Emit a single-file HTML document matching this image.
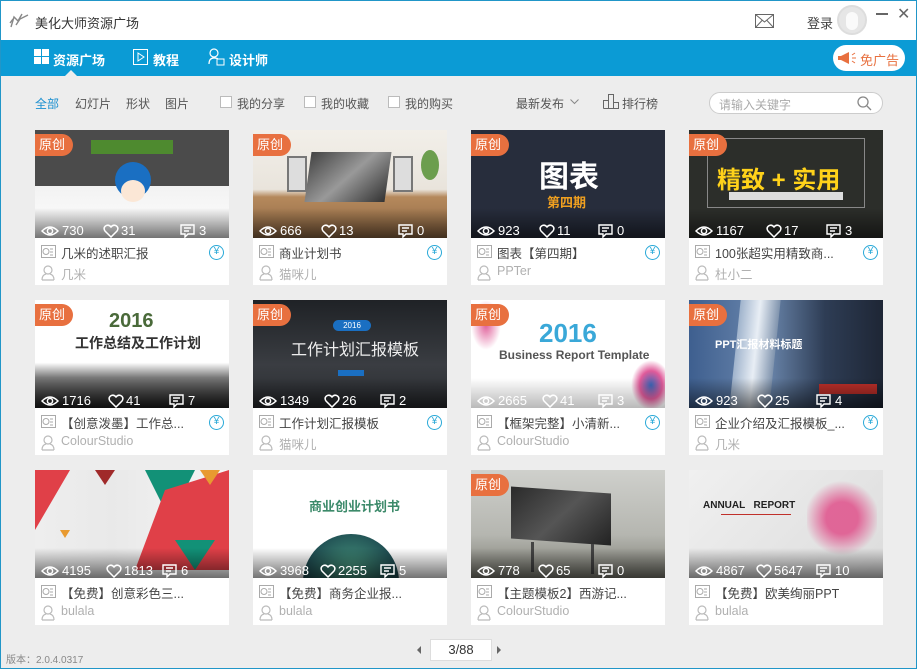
<!DOCTYPE html>
<html><head><meta charset="utf-8">
<style>
*{margin:0;padding:0;box-sizing:border-box}
body{width:917px;height:669px;overflow:hidden;background:#ededed;font-family:"Liberation Sans","Noto Sans CJK SC",sans-serif;position:relative;font-size:12px;color:#555}
.frame{position:absolute;left:0;top:0;width:917px;height:669px;border:1px solid #2196c8;pointer-events:none;z-index:50}
.titlebar{position:absolute;left:0;top:0;width:917px;height:40px;background:#fff}
.nav{position:absolute;left:0;top:40px;width:917px;height:36px;background:#0b9bd5}
.nav span{position:absolute;top:10px;color:#fff;font-size:13px;font-weight:bold}
.abs{position:absolute}
.filter{position:absolute;top:95px;font-size:12px;color:#555}
.cb{position:absolute;top:96px;width:12px;height:12px;border:1px solid #bbb;background:#fff}
.card{position:absolute;width:194px;height:155px;background:#fff}
.img{position:absolute;left:0;top:0;width:194px;height:108px;overflow:hidden}
.shade{position:absolute;left:0;bottom:0;width:194px;height:30px;background:linear-gradient(rgba(0,0,0,0),rgba(0,0,0,.55))}
.stats{position:absolute;left:0;top:93px;width:194px;height:16px;color:#fff;font-size:13px}
.stats svg{position:absolute;top:1px}
.stats b{position:absolute;font-weight:normal;top:0}
.badge{position:absolute;left:0;top:4px;width:38px;height:22px;background:#e8703f;border-radius:0 11px 11px 0;color:#fff;font-size:13px;line-height:22px;padding-left:4px}
.t{position:absolute;left:26px;top:113px;font-size:12.5px;color:#444;white-space:nowrap}
.a{position:absolute;left:26px;top:134px;font-size:12.5px;color:#b0b0b0}
.doc{position:absolute;left:6px;top:115px}
.usr{position:absolute;left:6px;top:135px}
.yuan{position:absolute;left:174px;top:115px;width:15px;height:15px;border:1.3px solid #2aa9d8;border-radius:50%;color:#2aa9d8;font-size:10px;line-height:12px;text-align:center}
</style></head><body>
<div class="titlebar">
 <svg class="abs" style="left:8px;top:11px" width="22" height="18" viewBox="0 0 22 18"><path d="M3 16 L6 6 L10 10 L14 3 M8 14 L12 8 L20 4 M5 8 L2 12" stroke="#888" stroke-width="1.4" fill="none"/></svg>
 <span class="abs" style="left:35px;top:13px;font-size:13px;color:#333">美化大师资源广场</span>
 <svg class="abs" style="left:755px;top:14px" width="19" height="14" viewBox="0 0 19 14"><rect x="0.5" y="0.5" width="18" height="13" fill="none" stroke="#666"/><path d="M0.5 0.5 L9.5 8 L18.5 0.5 M0.5 13.5 L7 6.5 M18.5 13.5 L12 6.5" stroke="#666" fill="none"/></svg>
 <span class="abs" style="left:807px;top:13px;font-size:13px;color:#444">登录</span>
 <div class="abs" style="left:837px;top:5px;width:30px;height:30px;border-radius:50%;background:#e6e6e6;border:2px solid #ddd"><div style="position:absolute;left:7px;top:5px;width:12px;height:18px;border-radius:6px;background:#fafafa"></div></div>
 <div class="abs" style="left:876px;top:13px;width:12px;height:2px;background:#666"></div>
 <span class="abs" style="left:897px;top:4px;font-size:16px;color:#666">✕</span>
</div>
<div class="nav">
 <svg class="abs" style="left:34px;top:9px" width="15" height="15"><rect x="0" y="0" width="7" height="7" fill="#fff"/><rect x="8" y="0" width="7" height="7" fill="#fff"/><rect x="0" y="8" width="7" height="7" fill="#fff"/><rect x="8" y="8" width="7" height="7" fill="#fff"/></svg>
 <span style="left:53px">资源广场</span>
 <div class="abs" style="left:65px;top:30px;width:0;height:0;border-left:6px solid transparent;border-right:6px solid transparent;border-bottom:6px solid #ededed"></div>
 <svg class="abs" style="left:133px;top:9px" width="15" height="16"><rect x="0.5" y="0.5" width="14" height="15" fill="none" stroke="#fff"/><path d="M5 4 L11 8 L5 12 Z" fill="none" stroke="#fff"/></svg>
 <span style="left:153px">教程</span>
 <svg class="abs" style="left:208px;top:8px" width="17" height="18"><circle cx="6" cy="5" r="4" fill="none" stroke="#fff" stroke-width="1.2"/><path d="M1 16 Q1 10 6 10 Q9 10 10 11" fill="none" stroke="#fff" stroke-width="1.2"/><rect x="9" y="11" width="7" height="6" fill="none" stroke="#fff"/></svg>
 <span style="left:229px">设计师</span>
 <div class="abs" style="left:833px;top:5px;width:72px;height:26px;background:#fff;border-radius:13px">
  <svg class="abs" style="left:5px;top:7px" width="20" height="12"><path d="M0 4 H3 V8 H0 Z M3 4 L11 0 V12 L3 8 Z" fill="#e8703f"/><path d="M14 3 L17 1 M14 6 H18 M14 9 L17 11" stroke="#e8703f" fill="none"/></svg>
  <span class="abs" style="left:27px;top:5px;font-size:13px;color:#e8703f;font-weight:normal">免广告</span>
 </div>
</div>
<span class="filter" style="left:35px;color:#1a8fd0">全部</span>
<span class="filter" style="left:75px">幻灯片</span>
<span class="filter" style="left:126px">形状</span>
<span class="filter" style="left:165px">图片</span>
<div class="cb" style="left:220px"></div><span class="filter" style="left:237px">我的分享</span>
<div class="cb" style="left:304px"></div><span class="filter" style="left:321px">我的收藏</span>
<div class="cb" style="left:388px"></div><span class="filter" style="left:405px">我的购买</span>
<span class="filter" style="left:516px">最新发布</span>
<svg class="abs" style="left:570px;top:99px" width="9" height="6"><path d="M0.5 0.5 L4.5 4.5 L8.5 0.5" fill="none" stroke="#888"/></svg>
<svg class="abs" style="left:603px;top:94px" width="16" height="15"><path d="M0.5 14.5 V6.5 H5.5 V14.5 M5.5 14.5 V0.5 H10.5 V14.5 M10.5 14.5 V8.5 H15.5 V14.5 H0.5" fill="none" stroke="#666"/></svg>
<span class="filter" style="left:622px">排行榜</span>
<div class="abs" style="left:709px;top:92px;width:174px;height:22px;background:#fff;border:1px solid #ccc;border-radius:11px">
 <span class="abs" style="left:9px;top:3px;color:#aaa;font-size:12px">请输入关键字</span>
 <svg class="abs" style="left:147px;top:3px" width="15" height="15"><circle cx="6" cy="6" r="5" fill="none" stroke="#888" stroke-width="1.3"/><path d="M10 10 L14 14" stroke="#888" stroke-width="1.3"/></svg>
</div>

<!-- Row 1 -->
<div class="card" style="left:35px;top:130px"><div class="img" style="background:linear-gradient(#4b4b4b 0,#4b4b4b 52%,#f2f2f2 52%,#fff 100%)">
<div class="abs" style="left:56px;top:10px;width:82px;height:14px;background:#4e8a2f"></div>
<div class="abs" style="left:80px;top:32px;width:36px;height:36px;border-radius:50%;background:#1a6fc2"></div><div class="abs" style="left:86px;top:50px;width:24px;height:22px;border-radius:50%;background:#fbe7d6"></div>
<div class="shade"></div></div></div>
<div class="card" style="left:253px;top:130px"><div class="img" style="background:linear-gradient(#f2efe9 0,#e9e4dc 55%,#b5895c 62%,#8f6844 100%)">
<div class="abs" style="left:55px;top:22px;width:80px;height:50px;background:linear-gradient(135deg,#444,#999,#333);transform:skewX(-8deg)"></div>
<div class="abs" style="left:34px;top:26px;width:20px;height:36px;background:#ddd;border:2px solid #777"></div>
<div class="abs" style="left:140px;top:26px;width:20px;height:36px;background:#ddd;border:2px solid #777"></div>
<div class="abs" style="left:168px;top:20px;width:18px;height:30px;background:#6c9e4e;border-radius:50%"></div>
<div class="shade"></div></div></div>
<div class="card" style="left:471px;top:130px"><div class="img" style="background:#272d3c">
<span class="abs" style="left:68px;top:22px;font-size:30px;color:#fff;font-weight:bold">图表</span>
<span class="abs" style="left:76px;top:62px;font-size:13px;color:#f0a020;font-weight:bold">第四期</span>
<div class="shade"></div></div></div>
<div class="card" style="left:689px;top:130px"><div class="img" style="background:#2c2e2a">
<div class="abs" style="left:18px;top:8px;width:158px;height:70px;border:1px solid #888"></div>
<span class="abs" style="left:28px;top:30px;font-size:24px;color:#ffd21a;font-weight:bold;white-space:nowrap">精致 + 实用</span>
<div class="abs" style="left:40px;top:62px;width:114px;height:8px;background:#ddd"></div>
<div class="shade"></div></div></div>

<!-- Row 2 -->
<div class="card" style="left:35px;top:300px"><div class="img" style="background:linear-gradient(#fff 0,#fff 58%,#777 72%,#222 100%)">
<span class="abs" style="left:74px;top:10px;font-size:20px;color:#4a6a3a;font-weight:bold">2016</span>
<span class="abs" style="left:40px;top:33px;font-size:14px;color:#333;font-weight:bold;white-space:nowrap">工作总结及工作计划</span>
<div class="shade"></div></div></div>
<div class="card" style="left:253px;top:300px"><div class="img" style="background:linear-gradient(#1f2226,#3a3d42 60%,#2a2c30)">
<div class="abs" style="left:80px;top:20px;width:38px;height:11px;background:#1a6fc2;border-radius:6px;color:#fff;font-size:8px;text-align:center;line-height:11px">2016</div>
<span class="abs" style="left:38px;top:36px;font-size:16px;color:#eee;white-space:nowrap">工作计划汇报模板</span>
<div class="abs" style="left:85px;top:70px;width:26px;height:6px;background:#1a6fc2"></div>
<div class="shade"></div></div></div>
<div class="card" style="left:471px;top:300px"><div class="img" style="background:#fff">
<div class="abs" style="left:0;top:0;width:30px;height:50px;background:radial-gradient(#e0609a,transparent 70%)"></div>
<div class="abs" style="left:160px;top:60px;width:40px;height:50px;background:radial-gradient(#3a66b8,#e05b9a 40%,transparent 70%)"></div>
<span class="abs" style="left:68px;top:18px;font-size:26px;color:#3aa8d8;font-weight:bold">2016</span>
<span class="abs" style="left:28px;top:48px;font-size:12px;color:#555;font-weight:bold;white-space:nowrap">Business Report Template</span>
<div class="shade" style="opacity:.5"></div></div></div>
<div class="card" style="left:689px;top:300px"><div class="img" style="background:linear-gradient(90deg,#3e5f8f,#6b87ad 40%,#2e3d55 70%,#1e2635)">
<div class="abs" style="left:46px;top:0;width:40px;height:108px;background:linear-gradient(90deg,#9fb3cc,#e8eef5,#7f93ad);transform:skewX(-6deg)"></div>
<span class="abs" style="left:26px;top:36px;font-size:11px;color:#fff;font-weight:bold;white-space:nowrap">PPT汇报材料标题</span>
<div class="abs" style="left:130px;top:84px;width:58px;height:10px;background:#c0302a"></div>
<div class="shade"></div></div></div>

<!-- Row 3 -->
<div class="card" style="left:35px;top:470px"><div class="img" style="background:linear-gradient(90deg,#eee,#e9e9e9 40%,#f5f5f5)">
<svg class="abs" style="left:0;top:0" width="194" height="108"><polygon points="0,0 35,0 0,60" fill="#e04048"/><polygon points="110,0 160,0 135,50" fill="#129177"/><polygon points="130,20 194,0 194,100 100,100" fill="#e04048"/><polygon points="60,0 80,0 70,15" fill="#a02a2a"/><polygon points="140,70 180,70 160,100" fill="#129177"/><polygon points="165,0 185,0 175,15" fill="#e89a30"/><polygon points="25,60 35,60 30,68" fill="#e89a30"/></svg>
<div class="shade"></div></div></div>
<div class="card" style="left:253px;top:470px"><div class="img" style="background:#fff">
<span class="abs" style="left:56px;top:26px;font-size:13px;color:#3c8a6a;font-weight:bold;white-space:nowrap">商业创业计划书</span>
<div class="abs" style="left:50px;top:64px;width:96px;height:96px;border-radius:50%;background:radial-gradient(circle at 50% 40%,#4a9a80,#1d4a50 60%,#0e2a30)"></div>
<div class="shade"></div></div></div>
<div class="card" style="left:471px;top:470px"><div class="img" style="background:linear-gradient(#cfd0cc,#b5b6b0 60%,#7a7a70)">
<div class="abs" style="left:40px;top:20px;width:100px;height:52px;background:linear-gradient(135deg,#2a2a2a,#555 50%,#222);transform:skewY(4deg)"></div>
<div class="abs" style="left:60px;top:72px;width:3px;height:30px;background:#444"></div><div class="abs" style="left:120px;top:74px;width:3px;height:30px;background:#444"></div>
<div class="shade"></div></div></div>
<div class="card" style="left:689px;top:470px"><div class="img" style="background:linear-gradient(135deg,#f0f0f0,#dcdcdc)">
<span class="abs" style="left:14px;top:30px;font-size:10px;color:#222;font-weight:bold;white-space:nowrap">ANNUAL&nbsp;&nbsp;&nbsp;REPORT</span>
<div class="abs" style="left:32px;top:44px;width:70px;height:1px;background:#c0302a"></div>
<div class="abs" style="left:118px;top:8px;width:70px;height:80px;background:radial-gradient(circle,#e0508a 0 30%,transparent 70%);opacity:.85"></div>
<div class="shade"></div></div></div>

<style>.c1{left:35px}.c2{left:253px}.c3{left:471px}.c4{left:689px}.r1{top:130px}.r2{top:300px}.r3{top:470px}.ov{position:absolute;width:194px;height:155px}</style>

<svg width="0" height="0" style="position:absolute"><defs>
<g id="eye"><path d="M1 7 Q9 -1 17 7 Q9 15 1 7 Z" fill="none" stroke="#fff" stroke-width="1.5"/><circle cx="9" cy="7" r="2.6" fill="none" stroke="#fff" stroke-width="1.5"/></g>
<g id="heart"><path d="M8 13 L2 7 Q0 4 2.5 2 Q5.5 0 8 3 Q10.5 0 13.5 2 Q16 4 14 7 Z" fill="none" stroke="#fff" stroke-width="1.5"/></g>
<g id="cmt"><path d="M1 1 H14 V10 H8 L5 13 V10 H1 Z M4 4 H11 M4 7 H9" fill="none" stroke="#fff" stroke-width="1.4"/></g>
<g id="doc"><rect x="0.5" y="0.5" width="14" height="12" fill="none" stroke="#aaa"/><circle cx="5" cy="6.5" r="3" fill="none" stroke="#aaa"/><path d="M9 4 H12 M9 7 H12 M9 10 H12" stroke="#aaa"/></g>
<g id="usr"><circle cx="7" cy="5" r="4" fill="none" stroke="#bbb" stroke-width="1.2"/><path d="M1 15 Q1 10 5 9 M13 15 Q13 10 9 9 M1 15 H13" fill="none" stroke="#bbb" stroke-width="1.2"/></g>
</defs></svg>

<div class="ov c1 r1"><div class="badge">原创</div><div class="stats"><svg style="left:6px" width="18" height="14"><use href="#eye"/></svg><b style="left:27px">730</b><svg style="left:68px" width="16" height="14"><use href="#heart"/></svg><b style="left:86px">31</b><svg style="left:145px" width="15" height="14"><use href="#cmt"/></svg><b style="left:164px">3</b></div><svg class="doc" width="15" height="13"><use href="#doc"/></svg><span class="t">几米的述职汇报</span><div class="yuan">¥</div><svg class="usr" width="14" height="16"><use href="#usr"/></svg><span class="a">几米</span></div>
<div class="ov c2 r1"><div class="badge">原创</div><div class="stats"><svg style="left:6px" width="18" height="14"><use href="#eye"/></svg><b style="left:27px">666</b><svg style="left:68px" width="16" height="14"><use href="#heart"/></svg><b style="left:86px">13</b><svg style="left:145px" width="15" height="14"><use href="#cmt"/></svg><b style="left:164px">0</b></div><svg class="doc" width="15" height="13"><use href="#doc"/></svg><span class="t">商业计划书</span><div class="yuan">¥</div><svg class="usr" width="14" height="16"><use href="#usr"/></svg><span class="a">猫咪儿</span></div>
<div class="ov c3 r1"><div class="badge">原创</div><div class="stats"><svg style="left:6px" width="18" height="14"><use href="#eye"/></svg><b style="left:27px">923</b><svg style="left:68px" width="16" height="14"><use href="#heart"/></svg><b style="left:86px">11</b><svg style="left:127px" width="15" height="14"><use href="#cmt"/></svg><b style="left:146px">0</b></div><svg class="doc" width="15" height="13"><use href="#doc"/></svg><span class="t">图表【第四期】</span><div class="yuan">¥</div><svg class="usr" width="14" height="16"><use href="#usr"/></svg><span class="a">PPTer</span></div>
<div class="ov c4 r1"><div class="badge">原创</div><div class="stats"><svg style="left:6px" width="18" height="14"><use href="#eye"/></svg><b style="left:27px">1167</b><svg style="left:77px" width="16" height="14"><use href="#heart"/></svg><b style="left:95px">17</b><svg style="left:137px" width="15" height="14"><use href="#cmt"/></svg><b style="left:156px">3</b></div><svg class="doc" width="15" height="13"><use href="#doc"/></svg><span class="t">100张超实用精致商...</span><div class="yuan">¥</div><svg class="usr" width="14" height="16"><use href="#usr"/></svg><span class="a">杜小二</span></div>

<div class="ov c1 r2"><div class="badge">原创</div><div class="stats"><svg style="left:6px" width="18" height="14"><use href="#eye"/></svg><b style="left:27px">1716</b><svg style="left:73px" width="16" height="14"><use href="#heart"/></svg><b style="left:91px">41</b><svg style="left:134px" width="15" height="14"><use href="#cmt"/></svg><b style="left:153px">7</b></div><svg class="doc" width="15" height="13"><use href="#doc"/></svg><span class="t">【创意泼墨】工作总...</span><div class="yuan">¥</div><svg class="usr" width="14" height="16"><use href="#usr"/></svg><span class="a">ColourStudio</span></div>
<div class="ov c2 r2"><div class="badge">原创</div><div class="stats"><svg style="left:6px" width="18" height="14"><use href="#eye"/></svg><b style="left:27px">1349</b><svg style="left:71px" width="16" height="14"><use href="#heart"/></svg><b style="left:89px">26</b><svg style="left:127px" width="15" height="14"><use href="#cmt"/></svg><b style="left:146px">2</b></div><svg class="doc" width="15" height="13"><use href="#doc"/></svg><span class="t">工作计划汇报模板</span><div class="yuan">¥</div><svg class="usr" width="14" height="16"><use href="#usr"/></svg><span class="a">猫咪儿</span></div>
<div class="ov c3 r2"><div class="badge">原创</div><div class="stats"><svg style="left:6px" width="18" height="14"><use href="#eye"/></svg><b style="left:27px">2665</b><svg style="left:71px" width="16" height="14"><use href="#heart"/></svg><b style="left:89px">41</b><svg style="left:127px" width="15" height="14"><use href="#cmt"/></svg><b style="left:146px">3</b></div><svg class="doc" width="15" height="13"><use href="#doc"/></svg><span class="t">【框架完整】小清新...</span><div class="yuan">¥</div><svg class="usr" width="14" height="16"><use href="#usr"/></svg><span class="a">ColourStudio</span></div>
<div class="ov c4 r2"><div class="badge">原创</div><div class="stats"><svg style="left:6px" width="18" height="14"><use href="#eye"/></svg><b style="left:27px">923</b><svg style="left:68px" width="16" height="14"><use href="#heart"/></svg><b style="left:86px">25</b><svg style="left:127px" width="15" height="14"><use href="#cmt"/></svg><b style="left:146px">4</b></div><svg class="doc" width="15" height="13"><use href="#doc"/></svg><span class="t">企业介绍及汇报模板_...</span><div class="yuan">¥</div><svg class="usr" width="14" height="16"><use href="#usr"/></svg><span class="a">几米</span></div>

<div class="ov c1 r3"><div class="stats"><svg style="left:6px" width="18" height="14"><use href="#eye"/></svg><b style="left:27px">4195</b><svg style="left:71px" width="16" height="14"><use href="#heart"/></svg><b style="left:89px">1813</b><svg style="left:127px" width="15" height="14"><use href="#cmt"/></svg><b style="left:146px">6</b></div><svg class="doc" width="15" height="13"><use href="#doc"/></svg><span class="t">【免费】创意彩色三...</span><svg class="usr" width="14" height="16"><use href="#usr"/></svg><span class="a">bulala</span></div>
<div class="ov c2 r3"><div class="stats"><svg style="left:6px" width="18" height="14"><use href="#eye"/></svg><b style="left:27px">3968</b><svg style="left:67px" width="16" height="14"><use href="#heart"/></svg><b style="left:85px">2255</b><svg style="left:127px" width="15" height="14"><use href="#cmt"/></svg><b style="left:146px">5</b></div><svg class="doc" width="15" height="13"><use href="#doc"/></svg><span class="t">【免费】商务企业报...</span><svg class="usr" width="14" height="16"><use href="#usr"/></svg><span class="a">bulala</span></div>
<div class="ov c3 r3"><div class="badge">原创</div><div class="stats"><svg style="left:6px" width="18" height="14"><use href="#eye"/></svg><b style="left:27px">778</b><svg style="left:67px" width="16" height="14"><use href="#heart"/></svg><b style="left:85px">65</b><svg style="left:127px" width="15" height="14"><use href="#cmt"/></svg><b style="left:146px">0</b></div><svg class="doc" width="15" height="13"><use href="#doc"/></svg><span class="t">【主题模板2】西游记...</span><svg class="usr" width="14" height="16"><use href="#usr"/></svg><span class="a">ColourStudio</span></div>
<div class="ov c4 r3"><div class="stats"><svg style="left:6px" width="18" height="14"><use href="#eye"/></svg><b style="left:27px">4867</b><svg style="left:67px" width="16" height="14"><use href="#heart"/></svg><b style="left:85px">5647</b><svg style="left:127px" width="15" height="14"><use href="#cmt"/></svg><b style="left:146px">10</b></div><svg class="doc" width="15" height="13"><use href="#doc"/></svg><span class="t">【免费】欧美绚丽PPT</span><svg class="usr" width="14" height="16"><use href="#usr"/></svg><span class="a">bulala</span></div>

<svg class="abs" style="left:417px;top:646px" width="5" height="8"><path d="M4 0 L0 4 L4 8 Z" fill="#666"/></svg>
<div class="abs" style="left:430px;top:639px;width:62px;height:22px;background:#fff;border:1px solid #ddd;text-align:center;line-height:20px;font-size:13px;color:#333">3/88</div>
<svg class="abs" style="left:497px;top:646px" width="5" height="8"><path d="M0 0 L4 4 L0 8 Z" fill="#666"/></svg>
<span class="abs" style="left:6px;top:651px;font-size:10px;color:#888">版本：2.0.4.0317</span>
<div class="frame"></div>
</body></html>
